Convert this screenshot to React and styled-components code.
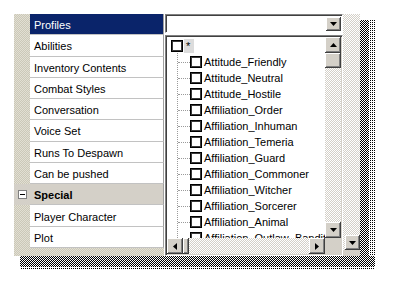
import React from 'react';
import styled, { createGlobalStyle, css } from 'styled-components';

const GlobalStyle = createGlobalStyle`
  body {
    margin: 0;
    background: #fff;
    font-family: "Liberation Sans", Arial, sans-serif;
    font-size: 11px;
    color: #000;
  }
`;

const dither = (a, b) => css`
  background-image: repeating-conic-gradient(${a} 0 25%, ${b} 0 50%);
  background-size: 2px 2px;
`;

const raised = css`
  background: #d4d0c8;
  box-shadow: inset -1px -1px #404040, inset 1px 1px #fff, inset -2px -2px #808080;
`;

const Page = styled.div`
  padding: 14px 0 0 14px;
`;

const Frame = styled.div`
  display: grid;
  grid-template-columns: 346px 15px;
  grid-template-rows: 242px 14px;
`;

const Panel = styled.div`
  display: flex;
  background: #fff;
`;

const PropertyColumn = styled.div`
  width: 150px;
  display: flex;
  flex-direction: column;
  padding-bottom: 8px;
  ${dither('#cbc8b8', '#e2dfd3')}
`;

const Row = styled.div`
  flex: 1;
  display: flex;
  background: ${p => (p.$category ? '#d4d0c8' : 'transparent')};
`;

const GutterCell = styled.div`
  width: 16px;
  display: flex;
  align-items: center;
  justify-content: center;
`;

const MinusBox = styled.div`
  width: 7px;
  height: 7px;
  border: 1px solid #808080;
  background: #fff;
  display: flex;
  align-items: center;
  justify-content: center;
  &::after {
    content: '';
    width: 5px;
    height: 1px;
    background: #000;
  }
`;

const NameCell = styled.div`
  flex: 1;
  box-sizing: border-box;
  padding: 2px 0 0 4px;
  display: flex;
  align-items: center;
  border-bottom: 1px solid #c2c2c2;
  border-right: 1px solid #a0a0a0;
  white-space: nowrap;
  background: ${p => (p.$selected ? '#0a246a' : p.$category ? '#d4d0c8' : '#fff')};
  color: ${p => (p.$selected ? '#fff' : '#000')};
  font-weight: ${p => (p.$category ? 'bold' : 'normal')};
`;

const ValueArea = styled.div`
  width: 179px;
  padding-left: 1px;
  box-sizing: border-box;
  display: flex;
  flex-direction: column;
  gap: 2px;
  background: #fff;
`;

const Combo = styled.div`
  height: 19px;
  box-sizing: border-box;
  border-top: 1px solid #808080;
  border-left: 1px solid #808080;
  border-right: 1px solid #fff;
  border-bottom: 1px solid #fff;
  box-shadow: inset 1px 1px #404040;
  display: flex;
  justify-content: flex-end;
  padding: 2px 1px 1px 2px;
`;

const ArrowButton = styled.div`
  ${raised}
  width: ${p => p.$w || 16}px;
  height: ${p => p.$h || 16}px;
  flex: none;
  display: flex;
  align-items: center;
  justify-content: center;
`;

const ListBox = styled.div`
  flex: 1;
  box-sizing: border-box;
  border-top: 1px solid #808080;
  border-left: 1px solid #808080;
  border-right: 1px solid #fff;
  border-bottom: 1px solid #fff;
  box-shadow: inset 1px 1px #404040, inset -1px -1px #d4d0c8;
  padding: 1px;
  display: grid;
  grid-template-columns: 1fr 16px;
  grid-template-rows: 1fr 16px;
  min-height: 0;
`;

const TreeView = styled.div`
  overflow: hidden;
  padding-left: 4px;
`;

const RootItem = styled.div`
  height: 16px;
  margin-top: 1px;
  display: flex;
  align-items: center;
`;

const Star = styled.span`
  padding: 0 4px 0 2px;
  height: 14px;
  line-height: 14px;
  background: #dcdcdc;
`;

const Check = styled.div`
  width: 10px;
  height: 10px;
  border: 1px solid #000;
  box-shadow: inset 0 0 0 1px #3a3a3a;
  background: #fff;
  flex: none;
  margin-right: ${p => p.$gap || 2}px;
`;

const ChildList = styled.div`
  margin-left: 6px;
  border-left: 1px dotted #9a9a9a;
  margin-top: -1px;
  padding-top: 1px;
`;

const ChildItem = styled.div`
  height: 16px;
  display: flex;
  align-items: center;
  white-space: nowrap;
  &::before {
    content: '';
    width: 12px;
    border-top: 1px dotted #9a9a9a;
    flex: none;
  }
`;

const VScroll = styled.div`
  display: flex;
  flex-direction: column;
`;

const Track = styled.div`
  flex: 1;
  ${dither('#fff', '#d4d0c8')}
`;

const Thumb = styled.div`
  ${raised}
  flex: none;
  width: ${p => (p.$horizontal ? '6px' : '16px')};
  height: ${p => (p.$horizontal ? '16px' : '15px')};
`;

const HScroll = styled.div`
  display: flex;
`;

const Corner = styled.div`
  background: #d4d0c8;
`;

const OuterScroll = styled.div`
  width: 17px;
  display: flex;
  flex-direction: column;
  align-items: flex-end;
  ${dither('#fff', '#d4d0c8')}
`;

const OuterFoot = styled.div`
  height: 6px;
  width: 100%;
  background: #d4d0c8;
`;

const Spacer = styled.div`
  flex: 1;
`;

const ShadowRight = styled.div`
  margin-top: 6px;
  display: flex;
`;

const ShadowBottom = styled.div`
  grid-column: 1 / 3;
  margin-left: 6px;
  display: flex;
  flex-direction: column;
`;

const Dense = styled.div`
  ${dither('#000', '#fff')}
  ${p => (p.$vertical ? 'width: 9px;' : 'height: 10px;')}
`;

const Sparse = styled.div`
  flex: 1;
  background-image: repeating-conic-gradient(#000 0 25%, transparent 0 100%);
  background-size: 2px 2px;
`;

const Arrow = ({ dir }) => {
  const pts = {
    down: '0,0 7,0 3.5,4',
    up: '0,4 7,4 3.5,0',
    left: '4,0 4,7 0,3.5',
    right: '0,0 0,7 4,3.5',
  }[dir];
  const vertical = dir === 'up' || dir === 'down';
  return (
    <svg width={vertical ? 7 : 4} height={vertical ? 4 : 7}>
      <polygon points={pts} fill="#000" />
    </svg>
  );
};

const properties = [
  { name: 'Profiles', selected: true },
  { name: 'Abilities' },
  { name: 'Inventory Contents' },
  { name: 'Combat Styles' },
  { name: 'Conversation' },
  { name: 'Voice Set' },
  { name: 'Runs To Despawn' },
  { name: 'Can be pushed' },
  { name: 'Special', category: true },
  { name: 'Player Character' },
  { name: 'Plot' },
];

const profiles = [
  'Attitude_Friendly',
  'Attitude_Neutral',
  'Attitude_Hostile',
  'Affiliation_Order',
  'Affiliation_Inhuman',
  'Affiliation_Temeria',
  'Affiliation_Guard',
  'Affiliation_Commoner',
  'Affiliation_Witcher',
  'Affiliation_Sorcerer',
  'Affiliation_Animal',
  'Affiliation_Outlaw_Bandit',
];

export default function App() {
  return (
    <Page>
      <GlobalStyle />
      <Frame>
        <Panel>
          <PropertyColumn>
            {properties.map(p => (
              <Row key={p.name} $category={p.category}>
                <GutterCell>{p.category && <MinusBox />}</GutterCell>
                <NameCell $selected={p.selected} $category={p.category}>
                  {p.name}
                </NameCell>
              </Row>
            ))}
          </PropertyColumn>
          <ValueArea>
            <Combo>
              <ArrowButton $w={15} $h={14}>
                <Arrow dir="down" />
              </ArrowButton>
            </Combo>
            <ListBox>
              <TreeView>
                <RootItem>
                  <Check $gap={1} />
                  <Star>*</Star>
                </RootItem>
                <ChildList>
                  {profiles.map(name => (
                    <ChildItem key={name}>
                      <Check />
                      {name}
                    </ChildItem>
                  ))}
                </ChildList>
              </TreeView>
              <VScroll>
                <ArrowButton>
                  <Arrow dir="up" />
                </ArrowButton>
                <Thumb />
                <Track />
                <ArrowButton>
                  <Arrow dir="down" />
                </ArrowButton>
              </VScroll>
              <HScroll>
                <ArrowButton>
                  <Arrow dir="left" />
                </ArrowButton>
                <Thumb $horizontal />
                <Track />
                <ArrowButton>
                  <Arrow dir="right" />
                </ArrowButton>
              </HScroll>
              <Corner />
            </ListBox>
          </ValueArea>
          <OuterScroll>
            <Spacer />
            <ArrowButton $w={15} $h={15}>
              <Arrow dir="down" />
            </ArrowButton>
            <OuterFoot />
          </OuterScroll>
        </Panel>
        <ShadowRight>
          <Dense $vertical />
          <Sparse />
        </ShadowRight>
        <ShadowBottom>
          <Dense />
          <Sparse />
        </ShadowBottom>
      </Frame>
    </Page>
  );
}
